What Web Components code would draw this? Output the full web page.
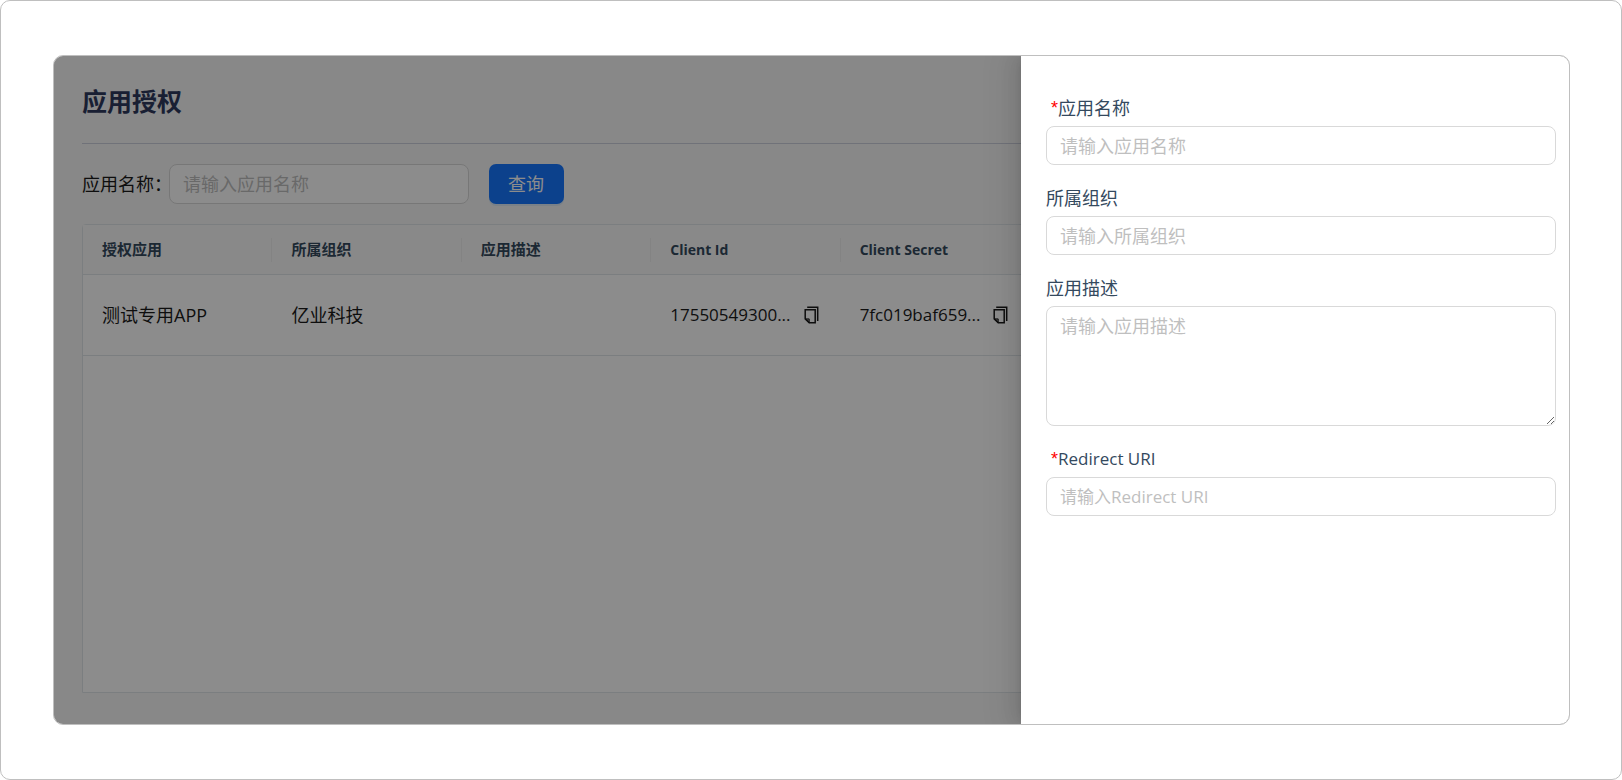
<!DOCTYPE html>
<html lang="zh-CN">
<head>
<meta charset="UTF-8">
<meta name="viewport" content="width=device-width, initial-scale=1.0">
<title>应用授权</title>
<style>
  body {
    margin: 0;
    font-family: "Open Sans", "Noto Sans CJK SC", sans-serif;
    font-size: 18px;
    line-height: 26px;
    color: #1a1a1a;
    --borde: #d9d9d9;
    --linea: #e0e6ea;
    --tenue: #bfbfbf;
    --primario: #1677ff;
  }
</style>
</head>
<body>
<page-frame>
  <auth-page heading="应用授权">
    <search-bar slot="tools" label="应用名称：" placeholder="请输入应用名称" action="查询"></search-bar>
    <app-table></app-table>
  </auth-page>
  <side-drawer slot="drawer">
    <form-field label="应用名称" placeholder="请输入应用名称" required></form-field>
    <form-field label="所属组织" placeholder="请输入所属组织"></form-field>
    <form-field label="应用描述" placeholder="请输入应用描述" multiline></form-field>
    <form-field label="Redirect URI" placeholder="请输入Redirect URI" required latin></form-field>
  </side-drawer>
</page-frame>

<script>
class PageFrame extends HTMLElement {
  constructor() {
    super();
    this.attachShadow({ mode: 'open' });
  }

  connectedCallback() {
    this.shadowRoot.innerHTML = `
      <style>
        :host {
          display: flex;
          box-sizing: border-box;
          min-height: 100vh;
          padding: 54px 51px 54px 52px;
          border: 1px solid var(--tenue);
          border-radius: 10px;
          background: #fff;
        }
        .card {
          position: relative;
          flex: 1;
          display: flex;
          min-width: 0;
          overflow: hidden;
          border: 1px solid var(--tenue);
          border-radius: 10px;
          background: #f7f7f7;
        }
        /* the mask and the drawer lie over the page */
        .mask {
          position: absolute;
          inset: 0;
          background: rgba(0, 0, 0, 0.45);
        }
        ::slotted([slot="drawer"]) {
          position: absolute;
          top: 0;
          right: 0;
          bottom: 0;
        }
      </style>
      <div class="card">
        <slot></slot>
        <div class="mask"></div>
        <slot name="drawer"></slot>
      </div>
    `;
  }
}

class AuthPage extends HTMLElement {
  constructor() {
    super();
    this.attachShadow({ mode: 'open' });
  }

  connectedCallback() {
    const heading = this.getAttribute('heading') || '';

    this.shadowRoot.innerHTML = `
      <style>
        :host {
          flex: 1;
          display: flex;
          flex-direction: column;
          gap: 20px;
          min-width: 0;
          padding: 27px 28px 31px;
        }
        h1 {
          margin: 0;
          padding-bottom: 24px;
          border-bottom: 1px solid #cdd0dc;
          font-size: 25px;
          line-height: 36px;
          font-weight: 700;
          color: #2f3a5e;
        }
        ::slotted(app-table) {
          flex: 1;
        }
      </style>
      <h1>${heading}</h1>
      <slot name="tools"></slot>
      <slot></slot>
    `;
  }
}

class SearchBar extends HTMLElement {
  constructor() {
    super();
    this.attachShadow({ mode: 'open' });
  }

  connectedCallback() {
    const label = this.getAttribute('label') || '';
    const placeholder = this.getAttribute('placeholder') || '';
    const action = this.getAttribute('action') || '';

    this.shadowRoot.innerHTML = `
      <style>
        :host {
          display: flex;
          align-items: center;
        }
        /* the full-width colon leaves blank space on its right */
        label {
          width: 87px;
          white-space: nowrap;
        }
        input {
          box-sizing: border-box;
          width: 300px;
          height: 40px;
          margin: 0 20px 0 0;
          padding: 0 13px;
          border: 1px solid var(--borde);
          border-radius: 8px;
          background: #fff;
          font: inherit;
        }
        input::placeholder {
          color: var(--tenue);
        }
        button {
          height: 40px;
          padding: 0 20px 0 19px;
          border: 0;
          border-radius: 7px;
          background: var(--primario);
          box-shadow: 0 2px 0 rgba(5, 145, 255, 0.1);
          color: #fff;
          font: inherit;
        }
      </style>
      <label for="name">${label}</label>
      <input id="name" type="text" placeholder="${placeholder}">
      <button type="button">${action}</button>
    `;
  }
}

class CopyButton extends HTMLElement {
  constructor() {
    super();
    this.attachShadow({ mode: 'open' });
  }

  connectedCallback() {
    this.shadowRoot.innerHTML = `
      <style>
        :host {
          display: block;
        }
        button {
          display: block;
          padding: 0;
          border: 0;
          background: none;
          color: inherit;
        }
        svg {
          display: block;
        }
      </style>
      <button type="button" aria-label="复制">
        <svg width="16" height="18" viewBox="0 0 16 18" fill="none" stroke="currentColor" stroke-width="1.5">
          <path d="M3.2 1.2H13.7V15"/>
          <path d="M1.2 3.7H11.2V16.7H5.2L1.2 12.9Z"/>
          <path d="M1.2 12.9H5.2V16.7Z" fill="currentColor" fill-opacity="0.5" stroke-width="1"/>
        </svg>
      </button>
    `;
  }
}

class AppTable extends HTMLElement {
  constructor() {
    super();
    this.attachShadow({ mode: 'open' });
  }

  connectedCallback() {
    this.shadowRoot.innerHTML = `
      <style>
        :host {
          display: block;
          border: 1px solid var(--linea);
          border-radius: 4px 4px 0 0;
          background: #fff;
        }
        table {
          width: 100%;
          table-layout: fixed;
          border-collapse: separate;
          border-spacing: 0;
        }
        .col {
          width: 13%;
        }
        th, td {
          box-sizing: border-box;
          padding: 0 21px 0 19px;
          border-bottom: 1px solid var(--linea);
          text-align: left;
          white-space: nowrap;
        }
        th {
          height: 50px;
          padding-bottom: 2px;
          background: linear-gradient(#efefef, #efefef) right center / 1px 24px no-repeat #fafafa;
          font-size: 15px;
          line-height: 24px;
          font-weight: 700;
          color: #34495e;
        }
        th.latin {
          padding-bottom: 0;
          font-size: 14px;
        }
        td {
          height: 81px;
        }
        td.latin {
          font-size: 17px;
        }
        .secret {
          display: flex;
          align-items: center;
          justify-content: space-between;
        }
      </style>
      <table>
        <colgroup>
          <col class="col"><col class="col"><col class="col"><col class="col"><col class="col"><col>
        </colgroup>
        <thead>
          <tr>
            <th>授权应用</th>
            <th>所属组织</th>
            <th>应用描述</th>
            <th class="latin">Client Id</th>
            <th class="latin">Client Secret</th>
            <th></th>
          </tr>
        </thead>
        <tbody>
          <tr>
            <td>测试专用APP</td>
            <td>亿业科技</td>
            <td></td>
            <td class="latin"><div class="secret"><span>17550549300...</span><copy-button></copy-button></div></td>
            <td class="latin"><div class="secret"><span>7fc019baf659...</span><copy-button></copy-button></div></td>
            <td></td>
          </tr>
        </tbody>
      </table>
    `;
  }
}

class SideDrawer extends HTMLElement {
  constructor() {
    super();
    this.attachShadow({ mode: 'open' });
  }

  connectedCallback() {
    this.shadowRoot.innerHTML = `
      <style>
        :host {
          display: block;
          box-sizing: border-box;
          width: 548px;
          max-width: 100%;
          background: #fff;
          box-shadow: -6px 0 16px rgba(0, 0, 0, 0.08),
            -3px 0 6px -4px rgba(0, 0, 0, 0.12),
            -9px 0 28px 8px rgba(0, 0, 0, 0.05);
        }
        form {
          display: flex;
          flex-direction: column;
          gap: 20px;
          padding: 39px 13px 39px 25px;
        }
      </style>
      <form><slot></slot></form>
    `;
  }
}

class FormField extends HTMLElement {
  constructor() {
    super();
    this.attachShadow({ mode: 'open' });
  }

  connectedCallback() {
    const label = this.getAttribute('label') || '';
    const placeholder = this.getAttribute('placeholder') || '';
    const mark = this.hasAttribute('required') ? '<span class="mark">*</span>' : '';
    const control = this.hasAttribute('multiline')
      ? `<textarea id="control" placeholder="${placeholder}"></textarea>`
      : `<input id="control" type="text" placeholder="${placeholder}">`;

    this.shadowRoot.innerHTML = `
      <style>
        :host {
          display: flex;
          flex-direction: column;
          gap: 5px;
        }
        :host([latin]) {
          font-size: 17px;
        }
        label {
          display: flex;
          color: #34495e;
        }
        .mark {
          padding-left: 5px;
          font-family: "Liberation Sans", sans-serif;
          font-size: 18px;
          color: #f00;
        }
        input, textarea {
          display: block;
          box-sizing: border-box;
          width: 100%;
          height: 39px;
          margin: 0;
          padding: 0 13px;
          border: 1px solid var(--borde);
          border-radius: 8px;
          background: #fff;
          font: inherit;
        }
        textarea {
          height: 120px;
          padding: 6px 13px;
          resize: vertical;
        }
        input::placeholder, textarea::placeholder {
          color: var(--tenue);
        }
      </style>
      <label for="control">${mark}<span>${label}</span></label>
      ${control}
    `;
  }
}

customElements.define('page-frame', PageFrame);
customElements.define('auth-page', AuthPage);
customElements.define('search-bar', SearchBar);
customElements.define('copy-button', CopyButton);
customElements.define('app-table', AppTable);
customElements.define('side-drawer', SideDrawer);
customElements.define('form-field', FormField);
</script>
</body>
</html>
